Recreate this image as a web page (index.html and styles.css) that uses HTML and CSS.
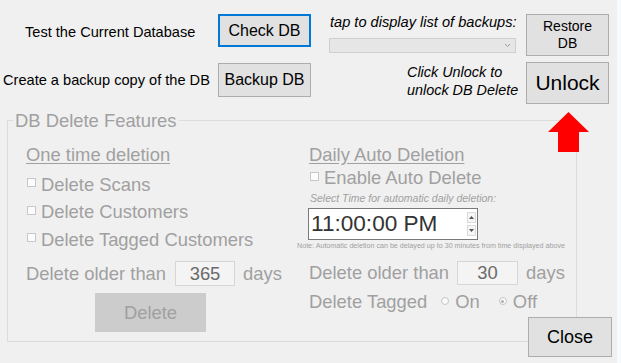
FILE: index.html
```html
<!DOCTYPE html>
<html>
<head>
<meta charset="utf-8">
<link rel="stylesheet" href="styles.css">
</head>
<body>
<div class="window">
  <div class="top">
    <div class="lbl l1">Test the Current Database</div>
    <button class="btn check">Check DB</button>
    <div class="mid1">
      <div class="tap">tap to display list of backups:</div>
      <div class="combo"><svg class="chev" width="7" height="5" viewBox="0 0 7 5"><path d="M1 1 L3.5 3.5 L6 1" fill="none" stroke="#9a9a9a" stroke-width="1"/></svg></div>
    </div>
    <button class="btn restore">Restore<br>DB</button>
    <div class="lbl l2">Create a backup copy of the DB</div>
    <button class="btn backup">Backup DB</button>
    <div class="unote">Click Unlock to<br>unlock DB Delete</div>
    <button class="btn unlock">Unlock</button>
  </div>

  <div class="group">
    <div class="legend">DB Delete Features</div>
    <div class="cols">
      <div class="col">
        <div class="title">One time deletion</div>
        <div class="chk first"><span class="box"></span><span>Delete Scans</span></div>
        <div class="chk"><span class="box"></span><span>Delete Customers</span></div>
        <div class="chk"><span class="box"></span><span>Delete Tagged Customers</span></div>
        <div class="older lolder"><span class="otext">Delete older than</span><span class="num n365">365</span><span class="days">days</span></div>
        <div class="delbtn">Delete</div>
      </div>
      <div class="col">
        <div class="title">Daily Auto Deletion</div>
        <div class="chk auto"><span class="box"></span><span>Enable Auto Delete</span></div>
        <div class="sel">Select Time for automatic daily deletion:</div>
        <div class="time"><span class="ttext">11:00:00 PM</span>
          <span class="spin">
            <span class="sp"><svg width="5" height="3" viewBox="0 0 5 3"><path d="M0 3 L2.5 0 L5 3Z" fill="#555"/></svg></span>
            <span class="sp"><svg width="5" height="3" viewBox="0 0 5 3"><path d="M0 0 L2.5 3 L5 0Z" fill="#555"/></svg></span>
          </span>
        </div>
        <div class="note">Note: Automatic deletion can be delayed up to 30 minutes from time displayed above</div>
        <div class="older rolder"><span class="otext">Delete older than</span><span class="num n30">30</span><span class="days">days</span></div>
        <div class="tagged"><span>Delete Tagged</span><span class="radio r-on"></span><span class="rl">On</span><span class="radio r-off checked"></span><span class="rl">Off</span></div>
      </div>
    </div>
  </div>

  <svg class="arrow" width="41" height="40" viewBox="0 0 41 40"><polygon points="20.5,0 41,20 31,20 31,40 10,40 10,20 0,20" fill="#ff0000"/></svg>
  <button class="btn close">Close</button>
</div>
</body>
</html>
```

FILE: styles.css
```css
html, body {
  margin: 0;
  padding: 0;
}
body {
  background: #f0f0f0;
  font-family: "Liberation Sans", Arial, sans-serif;
}
.window {
  position: relative;
  width: 621px;
  height: 363px;
  box-sizing: border-box;
  border-right: 4px solid #f7fafe;
  overflow: hidden;
  background: #f0f0f0;
}
.top {
  display: grid;
  grid-template-columns: 218px 93px 18px 189px 8px 83px;
  grid-template-rows: 42px 42px;
  row-gap: 6px;
  padding-top: 14px;
}
.btn {
  font-family: "Liberation Sans", Arial, sans-serif;
  background: #e1e1e1;
  border: 1px solid #adadad;
  color: #000;
  padding: 0;
  margin: 0;
  box-sizing: border-box;
  border-radius: 0;
}
.lbl {
  font-size: 14.6px;
  line-height: 18px;
  color: #000;
  padding-top: 9px;
  white-space: nowrap;
}
.l1 { grid-column: 1; grid-row: 1; padding-left: 25px; }
.l2 { grid-column: 1; grid-row: 2; padding-left: 3px; }
.check {
  grid-column: 2; grid-row: 1;
  height: 33px;
  font-size: 16px;
  border: 2px solid #0078d7;
}
.backup {
  grid-column: 2; grid-row: 2;
  height: 34px;
  margin-top: 1px;
  font-size: 16px;
}
.mid1 { grid-column: 4; grid-row: 1; }
.tap {
  font-size: 14.6px;
  font-style: italic;
  line-height: 17px;
  color: #000;
  padding-left: 1px;
  white-space: nowrap;
}
.combo {
  margin-top: 7px;
  width: 187px;
  height: 15px;
  box-sizing: border-box;
  background: #e6e6e6;
  border: 1px solid #cfcfcf;
  display: flex;
  justify-content: flex-end;
  align-items: center;
  padding-right: 4px;
}
.restore {
  grid-column: 6; grid-row: 1;
  height: 42px;
  font-size: 14px;
  line-height: 17px;
}
.unote {
  grid-column: 4; grid-row: 2;
  text-align: left;
  padding-left: 78px;
  font-style: italic;
  font-size: 14.4px;
  line-height: 18px;
  padding-top: 1px;
  color: #000;
  white-space: nowrap;
}
.unlock {
  grid-column: 6; grid-row: 2;
  height: 42px;
  font-size: 21px;
}

.group {
  margin-top: 16px;
  margin-left: 7px;
  width: 570px;
  height: 222px;
  box-sizing: border-box;
  border: 1px solid #dcdcdc;
  color: #a0a0a0;
  font-size: 18.4px;
}
.legend {
  margin-top: -11px;
  margin-left: 5px;
  height: 22px;
  line-height: 22px;
  padding: 0 2px;
  width: fit-content;
  background: #f0f0f0;
  font-size: 18.4px;
  white-space: nowrap;
}
.cols {
  display: grid;
  grid-template-columns: 283px 1fr;
  padding-top: 11px;
  padding-left: 18px;
}
.col {
  display: flex;
  flex-direction: column;
  align-items: flex-start;
}
.title {
  height: 24px;
  line-height: 24px;
  text-decoration: underline;
  text-underline-offset: 2px;
  white-space: nowrap;
}
.chk {
  display: flex;
  align-items: center;
  height: 27.5px;
  white-space: nowrap;
}
.chk.first { margin-top: 4px; }
.chk.auto { height: 22px; }
.box {
  width: 9px;
  height: 9px;
  box-sizing: border-box;
  border: 1px solid #c8c8c8;
  background: #fcfcfc;
  margin-left: 1px;
  margin-right: 5px;
  margin-bottom: 4px;
}
.older {
  display: flex;
  align-items: center;
  height: 25px;
  white-space: nowrap;
}
.lolder { margin-top: 7.5px; }
.rolder { margin-top: 9px; height: 24px; }
.otext { width: 149px; }
.rolder .otext { width: 148px; }
.num {
  box-sizing: border-box;
  height: 100%;
  border: 1px solid #d6d6d6;
  background: #f4f4f4;
  color: #6a6a6a;
  display: flex;
  align-items: center;
  justify-content: center;
}
.n365 { width: 60px; }
.n30 { width: 61px; }
.days { margin-left: 8px; }
.delbtn {
  margin-top: 7px;
  margin-left: 69px;
  width: 111px;
  height: 39px;
  background: #cccccc;
  color: #a0a0a0;
  display: flex;
  align-items: center;
  justify-content: center;
}
.sel {
  height: 19px;
  line-height: 19px;
  font-size: 10.5px;
  font-style: italic;
  white-space: nowrap;
  padding-left: 1px;
}
.time {
  margin-left: -1px;
  width: 170px;
  height: 32px;
  box-sizing: border-box;
  border: 1px solid #7a7a7a;
  background: #fff;
  display: flex;
  align-items: center;
  justify-content: space-between;
  padding-left: 2px;
  padding-right: 1px;
}
.ttext {
  font-size: 22.6px;
  color: #333;
  white-space: nowrap;
}
.spin {
  display: flex;
  flex-direction: column;
  gap: 2px;
  width: 9px;
}
.sp {
  height: 11px;
  box-sizing: border-box;
  border: 1px solid #dadada;
  background: #f6f6f6;
  display: flex;
  align-items: center;
  justify-content: center;
}
.note {
  height: 12px;
  line-height: 12px;
  font-size: 7.15px;
  margin-left: -12px;
  white-space: nowrap;
}
.tagged {
  margin-top: 4px;
  height: 26px;
  display: flex;
  align-items: center;
  white-space: nowrap;
}
.radio {
  width: 8px;
  height: 8px;
  box-sizing: border-box;
  border-radius: 50%;
  border: 1px solid #c6c6c6;
  background: #fafafa;
  margin-bottom: 2px;
  position: relative;
}
.r-on { margin-left: 14px; margin-right: 6px; }
.r-off { margin-left: 19px; margin-right: 6px; }
.checked::after {
  content: "";
  position: absolute;
  left: 1.5px;
  top: 1.5px;
  width: 3px;
  height: 3px;
  border-radius: 50%;
  background: #b0b0b0;
}

.arrow {
  position: absolute;
  left: 548px;
  top: 112px;
}
.close {
  position: absolute;
  left: 528px;
  top: 317px;
  width: 84px;
  height: 40px;
  font-size: 18px;
}
```
